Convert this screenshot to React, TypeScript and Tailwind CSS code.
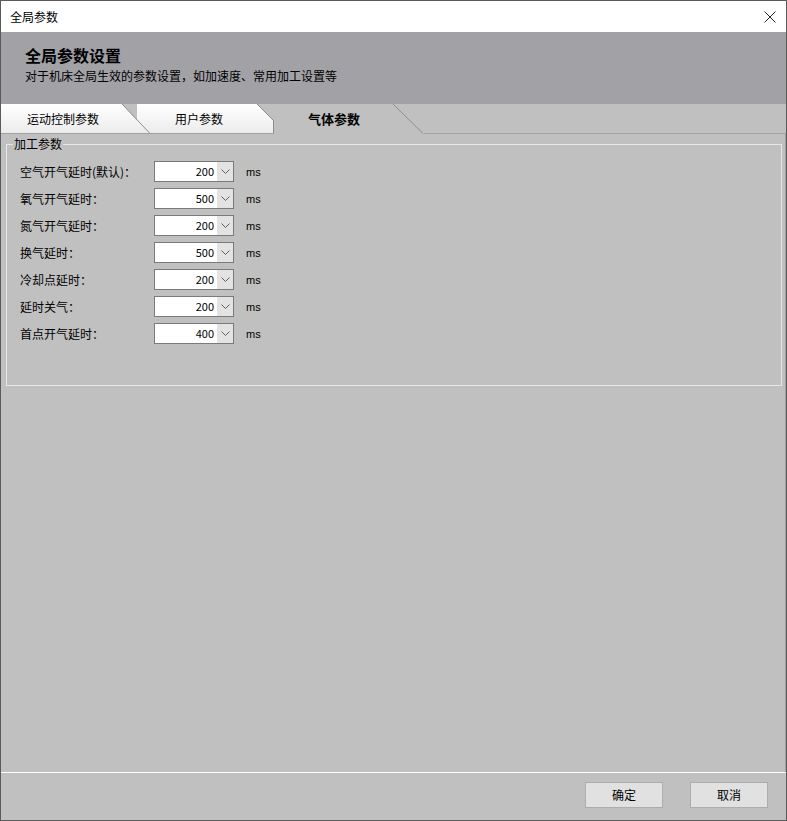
import React from "react";

const rows = [
  { label: "空气开气延时(默认)：", value: "200" },
  { label: "氧气开气延时：", value: "500" },
  { label: "氮气开气延时：", value: "200" },
  { label: "换气延时：", value: "500" },
  { label: "冷却点延时：", value: "200" },
  { label: "延时关气：", value: "200" },
  { label: "首点开气延时：", value: "400" },
];

function Tab1() {
  return (
    <div className="relative z-10 w-[149px] h-full shrink-0">
      <svg className="absolute inset-0" width="149" height="30" viewBox="0 0 149 30">
        <defs>
          <linearGradient id="g1" x1="0" y1="0" x2="0" y2="1">
            <stop offset="0" stopColor="#ffffff" />
            <stop offset="1" stopColor="#ebebeb" />
          </linearGradient>
        </defs>
        <polygon points="0,0 121,0 149,30 0,30" fill="url(#g1)" />
        <line x1="121" y1="0" x2="149" y2="29.5" stroke="#8c8c8c" strokeWidth="1" />
        <line x1="0" y1="29.5" x2="149" y2="29.5" stroke="#a0a0a0" strokeWidth="1" />
      </svg>
      <div className="relative h-full flex items-center pl-[26px] text-[12px] text-black">运动控制参数</div>
    </div>
  );
}

function Tab2() {
  return (
    <div className="relative w-[137px] h-full shrink-0 ml-[-13px]">
      <svg className="absolute inset-0" width="137" height="30" viewBox="0 0 137 30">
        <defs>
          <linearGradient id="g2" x1="0" y1="0" x2="0" y2="1">
            <stop offset="0" stopColor="#ffffff" />
            <stop offset="1" stopColor="#ebebeb" />
          </linearGradient>
        </defs>
        <polygon points="0,0 120,0 136,16 136,30 0,30" fill="url(#g2)" />
        <line x1="120" y1="0" x2="136.5" y2="16.5" stroke="#8c8c8c" strokeWidth="1" />
        <line x1="136.5" y1="16" x2="136.5" y2="30" stroke="#8c8c8c" strokeWidth="1" />
        <line x1="0" y1="29.5" x2="137" y2="29.5" stroke="#a0a0a0" strokeWidth="1" />
      </svg>
      <div className="relative h-full flex items-center pl-[38px] text-[12px] text-black">用户参数</div>
    </div>
  );
}

function Tab3() {
  return (
    <div className="relative w-[150px] h-full shrink-0">
      <svg className="absolute inset-0" width="150" height="30" viewBox="0 0 150 30">
        <line x1="119" y1="0" x2="149" y2="29.5" stroke="#8c8c8c" strokeWidth="1" />
      </svg>
      <div className="relative h-full flex items-center pl-[34px] text-[13px] font-bold text-black">气体参数</div>
    </div>
  );
}

function Chevron() {
  return (
    <svg width="9" height="6" viewBox="0 0 9 6">
      <polyline points="0.5,0.5 4.5,4.5 8.5,0.5" fill="none" stroke="#606060" strokeWidth="1" />
    </svg>
  );
}

export default function App() {
  return (
    <div className="w-[787px] h-[821px] border border-[#5a5a5a] flex flex-col bg-[#c0c0c0] font-['Noto_Sans_CJK_SC',sans-serif] text-black overflow-hidden">
      {/* Title bar */}
      <div className="h-[31px] shrink-0 bg-white flex items-center justify-between pl-[9px] pr-[10px]">
        <span className="text-[12px] leading-none">全局参数</span>
        <svg width="12" height="12" viewBox="0 0 12 12">
          <line x1="0.5" y1="0.5" x2="11.5" y2="11.5" stroke="#222" strokeWidth="1" />
          <line x1="11.5" y1="0.5" x2="0.5" y2="11.5" stroke="#222" strokeWidth="1" />
        </svg>
      </div>

      {/* Header */}
      <div className="h-[72px] shrink-0 bg-[#a2a1a6] flex flex-col pl-[24px] pt-[13px]">
        <div className="text-[16px] leading-[20px] font-bold">全局参数设置</div>
        <div className="text-[12px] leading-[16px] mt-[3px]">对于机床全局生效的参数设置，如加速度、常用加工设置等</div>
      </div>

      {/* Tabs */}
      <div className="h-[30px] shrink-0 flex bg-[#c0c0c0]">
        <Tab1 />
        <Tab2 />
        <Tab3 />
        <div className="flex-1 h-full border-b border-[#a0a0a0]"></div>
      </div>

      {/* Content */}
      <div className="flex-1 border-r border-[#a0a0a0] flex flex-col">
        <div className="relative mt-[10px] ml-[5px] mr-[3px] h-[242px] border border-[#e8e8e8]">
          <div className="absolute top-[-9px] left-[6px] bg-[#c0c0c0] px-[1px] text-[12px] leading-[16px]">加工参数</div>
          <div className="flex flex-col gap-[6px] pt-[16px] pl-[13px]">
            {rows.map((r) => (
              <div key={r.label} className="flex items-center h-[21px]">
                <div className="w-[134px] text-[12px] leading-none">{r.label}</div>
                <div className="w-[80px] h-[21px] border border-[#7a7a7a] flex bg-white">
                  <div className="flex-1 flex items-center justify-end pr-[3px] text-[11px] leading-none">{r.value}</div>
                  <div className="w-[16px] bg-[#e3e3e3] flex items-center justify-center">
                    <Chevron />
                  </div>
                </div>
                <div className="ml-[12px] pt-[2px] text-[11px] leading-none font-['Liberation_Sans',sans-serif]">ms</div>
              </div>
            ))}
          </div>
        </div>
      </div>

      {/* Footer */}
      <div className="h-[48px] shrink-0 border-t border-white flex justify-end items-start pt-[9px] pr-[18px] gap-[27px]">
        <button className="w-[78px] h-[26px] bg-[#e1e1e1] border border-[#adadad] text-[12px] flex items-center justify-center">确定</button>
        <button className="w-[78px] h-[26px] bg-[#e1e1e1] border border-[#adadad] text-[12px] flex items-center justify-center">取消</button>
      </div>
    </div>
  );
}
